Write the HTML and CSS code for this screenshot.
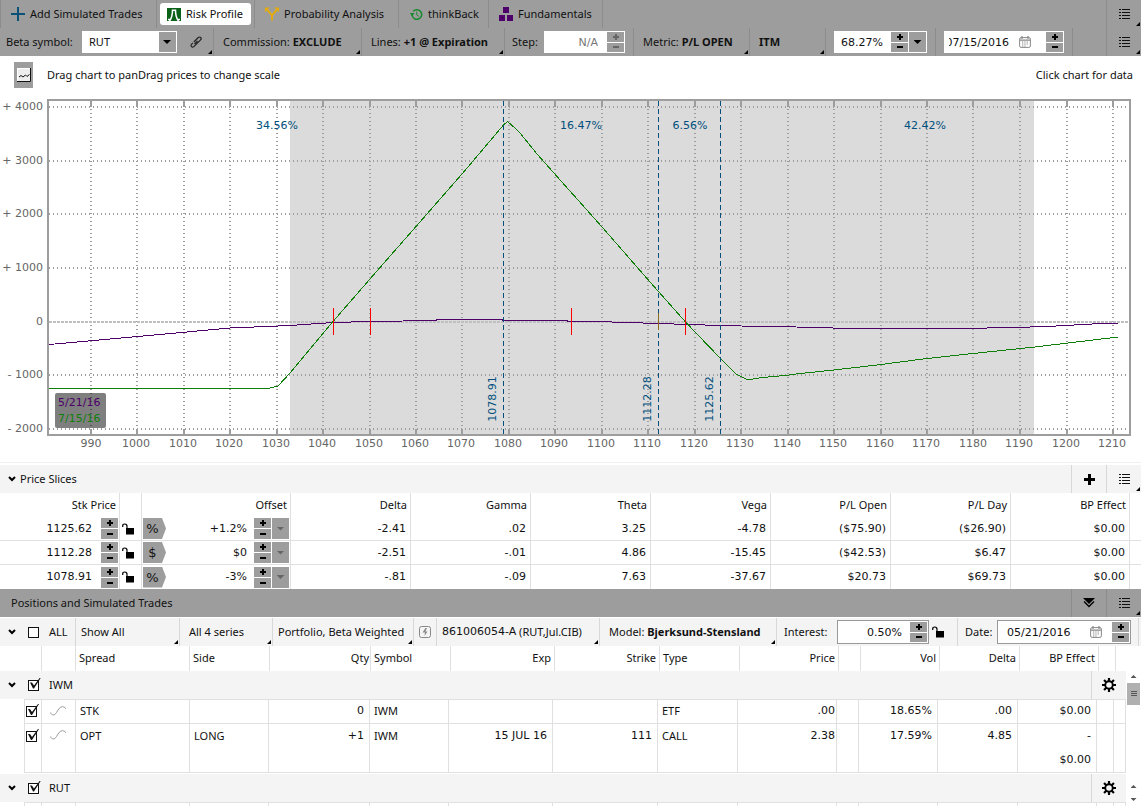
FILE: index.html
```html
<!DOCTYPE html>
<html lang="en">
<head>
<meta charset="utf-8">
<title>Risk Profile</title>
<link rel="stylesheet" href="styles.css">
</head>
<body>
<svg class="defs" aria-hidden="true">
  <symbol id="i-list" viewBox="0 0 11 10"><path d="M3 .5h8M3 3.500h8M3 6.500h8M3 9.500h8M0 .5h2M0 3.500h2M0 6.500h2M0 9.500h2" stroke="#111" stroke-width="1" shape-rendering="crispEdges"/></symbol>
  <symbol id="i-lock" viewBox="0 0 12 12"><path d="M4 5h8v6.500h-8z" fill="#000"/><path d="M.7 4V3Q.7 1 2.700 1Q5 1 5 3.200V5.500" fill="none" stroke="#000" stroke-width="1.200"/></symbol>
  <symbol id="i-cal" viewBox="0 0 12 12"><rect x=".6" y="1.600" width="10.800" height="9.800" rx="1.500" fill="none" stroke="#888"/><path d="M3 0v3M9 0v3M1 4.200h10" stroke="#888" stroke-width="1.200"/><path d="M3 6h6.500M3 8h6.500M3 10h4.500" stroke="#888" stroke-dasharray="1.300 1"/></symbol>
  <symbol id="i-gear" viewBox="0 0 14 14"><g stroke="#000" stroke-width="2.200"><path d="M7 0V14M0 7H14M2.050 2.050L11.950 11.950M11.950 2.050L2.050 11.950"/></g><circle cx="7" cy="7" r="4.700" fill="#000"/><circle cx="7" cy="7" r="2.800" fill="#f4f4f4"/></symbol>
  <symbol id="i-wave" viewBox="0 0 16 10"><path d="M.5 6.500C1.500 9.500 4.500 10 6.500 6.500C8.500 3 10 .7 12.500 .7C14.500 .7 15.300 1.600 15.600 2.800" fill="none" stroke="#999"/></symbol>
  <symbol id="i-chev" viewBox="0 0 8 6"><path d="M1 1L4 4L7 1" fill="none" stroke="#000" stroke-width="2"/></symbol>
</svg>
<div class="app">
  <nav class="bar tabs">
    <button class="cell tab w-add"><svg width="14" height="14" viewBox="0 0 14 14"><path d="M7 0V14M0 7H14" stroke="#0a5278" stroke-width="2"/></svg>Add Simulated Trades</button>
    <div class="cell w-risk"><button class="pill"><svg width="14" height="13" viewBox="0 0 14 13"><path d="M0 0H14V13H0Z" fill="#0c6118"/><path d="M2.500 13Q5.500 9 5.500 2.200H8.500Q8.500 9 11.500 13M1 11.500H4M10 11.500H13" fill="none" stroke="#fff" stroke-width="1.500"/><path d="M7 5V13" stroke="#0c6118"/></svg>Risk Profile</button></div>
    <button class="cell tab w-prob"><svg width="14" height="14" viewBox="0 0 15 14"><path d="M7.500 14V8.500L2.500 2.500M7.500 8.500L12.500 2.500" fill="none" stroke="#e5ac0b" stroke-width="2"/><path d="M0 0H5L0 5ZM15 0H10L15 5Z" fill="#e5ac0b"/></svg>Probability Analysis</button>
    <button class="cell tab w-think"><svg width="13" height="13" viewBox="0 0 14 13"><path d="M2.200 7A5.200 5.200 0 1 0 3.500 3" fill="none" stroke="#158a2c" stroke-width="1.600"/><path d="M0 5H5L2.300 8.500Z" fill="#158a2c"/><path d="M7.300 3.500V7L9.500 8.500" fill="none" stroke="#158a2c"/></svg>thinkBack</button>
    <button class="cell tab w-fund"><svg width="14" height="14" viewBox="0 0 14 14"><path d="M4 0H10V6H4ZM0 8H6V14H0ZM8 8H14V14H8Z" fill="#4d0069"/></svg>Fundamentals</button>
    <span class="grow"></span>
    <button class="cell menu corner" aria-label="Menu"><svg width="11" height="10"><use href="#i-list"/></svg></button>
  </nav>

  <div class="bar tools">
    <div class="cell corner w-beta"><label for="beta">Beta symbol:</label>
      <span class="combo"><select id="beta"><option>RUT</option></select></span>
      <button class="plain" aria-label="Link"><svg width="12" height="12" viewBox="0 0 12 12"><path d="M7.500 5L4.500 8M2.800 7L1.500 8.300A1.600 1.600 0 0 0 3.800 10.600L10.600 3.800A1.600 1.600 0 0 0 8.300 1.500L3.800 6" fill="none" stroke="#222" stroke-width="1.200"/></svg></button></div>
    <button class="cell corner pad w-comm">Commission: <b>EXCLUDE</b></button>
    <button class="cell corner pad w-lines">Lines: <b>+1 @ Expiration</b></button>
    <div class="cell w-step"><label for="step">Step:</label>
      <span class="field f-step"><input id="step" class="num" value="N/A" disabled><span class="spin off"><button aria-label="Step up"></button><button aria-label="Step down"></button></span></span></div>
    <button class="cell corner pad w-metric">Metric: <b>P/L OPEN</b></button>
    <button class="cell corner pad w-itm"><b>ITM</b></button>
    <div class="cell w-pct"><span class="field f-pct"><input class="num" aria-label="Probability" value="68.27%"><span class="spin"><button aria-label="Increase"></button><button aria-label="Decrease"></button></span><button class="drop" aria-label="Choose"></button></span></div>
    <div class="cell w-date"><span class="field f-date"><span class="clip"><input class="num" aria-label="Date" value="07/15/2016"></span><svg class="cal" width="12" height="12"><use href="#i-cal"/></svg><span class="spin"><button aria-label="Next day"></button><button aria-label="Previous day"></button></span></span></div>
    <span class="cell grow"></span>
    <button class="cell menu corner" aria-label="Menu"><svg width="11" height="10"><use href="#i-list"/></svg></button>
  </div>

  <div class="hints">
    <button class="chartbtn" aria-label="Chart"><svg width="14" height="14" viewBox="0 0 14 14"><rect x=".5" y=".5" width="13" height="13" fill="#eee" stroke="#fff"/><path d="M13.500 0V13.500H0" fill="none" stroke="#111"/><path d="M2 9L4 7.500L6 9L8.500 7L10 8.500L12.500 6.500" fill="none" stroke="#111"/></svg></button>
    <span class="grow">Drag chart to panDrag prices to change scale</span>
    <span>Click chart for data</span>
  </div>

  <svg class="chart" viewBox="0 94 1141 368" role="img" aria-label="Profit and loss by price">
    <rect x="290" y="101" width="744" height="333" fill="#dbdbdb"/>
    <g fill="none" stroke="#9d9d9d" stroke-width="2" shape-rendering="crispEdges">
      <path stroke-dasharray="1 3" d="M91 101V434M137 101V434M184 101V434M230 101V434M277 101V434M323 101V434M370 101V434M416 101V434M462 101V434M509 101V434M555 101V434M602 101V434M648 101V434M695 101V434M741 101V434M788 101V434M834 101V434M881 101V434M927 101V434M973 101V434M1020 101V434M1067 101V434M1113 101V434M49 107H1129M49 161H1129M49 214H1129M49 268H1129M49 375H1129M49 429H1129"/>
      <path stroke="#c0c0c0" stroke-dasharray="3 1" d="M49 322H1129"/>
      <path d="M91 101v6M137 101v6M184 101v6M230 101v6M277 101v6M323 101v6M370 101v6M416 101v6M462 101v6M509 101v6M555 101v6M602 101v6M648 101v6M695 101v6M741 101v6M788 101v6M834 101v6M881 101v6M927 101v6M973 101v6M1020 101v6M1067 101v6M1113 101v6M91 434v-5M137 434v-5M184 434v-5M230 434v-5M277 434v-5M323 434v-5M370 434v-5M416 434v-5M462 434v-5M509 434v-5M555 434v-5M602 434v-5M648 434v-5M695 434v-5M741 434v-5M788 434v-5M834 434v-5M881 434v-5M927 434v-5M973 434v-5M1020 434v-5M1067 434v-5M1113 434v-5"/>
      <rect x="48" y="100" width="1082" height="335"/>
      <g stroke-width="1">
        <path stroke="#4d0069" d="M49 344.500L138 336.500L230 328L290 325.500L333 322.500L370 321.500L436 320.500L436 319.500H502V320.500H567V321.500L612 322L658 323.500L720 325.500L762 326.500L796 327L851 328.500H960L1014 327.500L1047 326.500L1101 323.500H1118"/>
        <path stroke="#0f7f0a" d="M49 388.500H268L278 386L290 373L333 321.500L380 267.500L416 226.500L462 174L503.500 125L507.500 121.500L516 129L520 133L537 154L602 227L658 291L686 322.500L720 358L736 374L740 376L747 379.500H750L762 377.500L785 375.500L796 374L834 370L881 364.500L927 358.500L973 353.500L1035 347L1068 343L1118 337"/>
        <path stroke="#004f7c" stroke-dasharray="5 3" d="M503.500 101V434M658.500 101V434M720.500 101V434"/>
        <path stroke="#f00" d="M333.500 308V335M370.500 308V335M571.500 308V335M685.500 308V335"/>
        <path stroke="#8a6a1e" d="M658.500 313V330"/>
      </g>
    </g>
    <rect x="55" y="393" width="51" height="35" rx="2" fill="#000" fill-opacity=".5"/>
    <text x="58" y="406" fill="#4d0069">5/21/16</text><text x="58" y="422" fill="#0f7f0a">7/15/16</text>
    <g fill="#666" text-anchor="end">
      <text x="43" y="110">+ 4000</text><text x="43" y="164">+ 3000</text><text x="43" y="217">+ 2000</text><text x="43" y="271">+ 1000</text><text x="43" y="325">0</text><text x="43" y="378">- 1000</text><text x="43" y="432">- 2000</text>
    </g>
    <g fill="#666" text-anchor="middle">
      <text x="91" y="447">990</text><text x="136" y="447">1000</text><text x="183" y="447">1010</text><text x="229" y="447">1020</text><text x="276" y="447">1030</text><text x="322" y="447">1040</text><text x="369" y="447">1050</text><text x="415" y="447">1060</text><text x="461" y="447">1070</text><text x="508" y="447">1080</text><text x="554" y="447">1090</text><text x="601" y="447">1100</text><text x="647" y="447">1110</text><text x="694" y="447">1120</text><text x="740" y="447">1130</text><text x="787" y="447">1140</text><text x="833" y="447">1150</text><text x="880" y="447">1160</text><text x="926" y="447">1170</text><text x="973" y="447">1180</text><text x="1019" y="447">1190</text><text x="1066" y="447">1200</text><text x="1112" y="447">1210</text>
    </g>
    <g fill="#004f7c" text-anchor="middle">
      <text x="277" y="129">34.56%</text><text x="581" y="129">16.47%</text><text x="690" y="129">6.56%</text><text x="925" y="129">42.42%</text>
      <text transform="translate(496 399) rotate(-90)">1078.91</text><text transform="translate(651 399) rotate(-90)">1112.28</text><text transform="translate(713 399) rotate(-90)">1125.62</text>
    </g>
  </svg>

  <section class="slices">
    <div class="bar light head">
      <button class="fold" aria-label="Collapse"><svg width="8" height="6"><use href="#i-chev"/></svg></button><span class="grow">Price Slices</span>
      <button class="cell side" aria-label="Add slice"><svg width="12" height="12" viewBox="0 0 12 12"><path d="M6.500 1V12M1 6.500H12" stroke="#000" stroke-width="3"/></svg></button>
      <button class="cell side menu corner" aria-label="Menu"><svg width="11" height="10"><use href="#i-list"/></svg></button>
    </div>
    <table class="grid price">
      <colgroup><col class="c120"><col class="c22"><col class="c149"><col class="c120"><col class="c120"><col class="c120"><col class="c120"><col class="c120"><col class="c120"><col class="c119"><col class="c12"></colgroup>
      <thead><tr><th>Stk Price</th><th></th><th>Offset</th><th>Delta</th><th>Gamma</th><th>Theta</th><th>Vega</th><th>P/L Open</th><th>P/L Day</th><th>BP Effect</th><th></th></tr></thead>
      <tbody>
        <tr><td><div class="edit"><input class="num" aria-label="Stock price" value="1125.62"><span class="spin"><button aria-label="Up"></button><button aria-label="Down"></button></span></div></td><td class="lk"><svg width="12" height="12"><use href="#i-lock"/></svg></td><td><div class="edit off-edit"><button class="tag">%</button><input class="num" aria-label="Offset" value="+1.2%"><span class="spin"><button aria-label="Up"></button><button aria-label="Down"></button></span><button class="drop dim" aria-label="Choose"></button></div></td><td>-2.41</td><td>.02</td><td>3.25</td><td>-4.78</td><td>($75.90)</td><td>($26.90)</td><td>$0.00</td><td></td></tr>
        <tr><td><div class="edit"><input class="num" aria-label="Stock price" value="1112.28"><span class="spin"><button aria-label="Up"></button><button aria-label="Down"></button></span></div></td><td class="lk"><svg width="12" height="12"><use href="#i-lock"/></svg></td><td><div class="edit off-edit"><button class="tag">$</button><input class="num" aria-label="Offset" value="$0"><span class="spin"><button aria-label="Up"></button><button aria-label="Down"></button></span><button class="drop dim" aria-label="Choose"></button></div></td><td>-2.51</td><td>-.01</td><td>4.86</td><td>-15.45</td><td>($42.53)</td><td>$6.47</td><td>$0.00</td><td></td></tr>
        <tr><td><div class="edit"><input class="num" aria-label="Stock price" value="1078.91"><span class="spin"><button aria-label="Up"></button><button aria-label="Down"></button></span></div></td><td class="lk"><svg width="12" height="12"><use href="#i-lock"/></svg></td><td><div class="edit off-edit"><button class="tag">%</button><input class="num" aria-label="Offset" value="-3%"><span class="spin"><button aria-label="Up"></button><button aria-label="Down"></button></span><button class="drop dim" aria-label="Choose"></button></div></td><td>-.81</td><td>-.09</td><td>7.63</td><td>-37.67</td><td>$20.73</td><td>$69.73</td><td>$0.00</td><td></td></tr>
      </tbody>
    </table>
  </section>

  <section class="positions">
    <div class="bar head">
      <span class="grow title">Positions and Simulated Trades</span>
      <button class="cell side" aria-label="Collapse panel"><svg width="12" height="10" viewBox="0 0 12 10"><path d="M0 0H12L6 6Z" fill="#000"/><path d="M1 3.500L6 8.500L11 3.500" fill="none" stroke="#000" stroke-width="1.300"/></svg></button>
      <button class="cell side menu corner" aria-label="Menu"><svg width="11" height="10"><use href="#i-list"/></svg></button>
    </div>
    <div class="bar light filters">
      <div class="cell w-all"><button class="fold" aria-label="Collapse all"><svg width="8" height="6"><use href="#i-chev"/></svg></button><label class="pick"><input type="checkbox">ALL</label></div>
      <button class="cell corner w-show">Show All</button>
      <button class="cell corner w-series">All 4 series</button>
      <button class="cell corner w-port">Portfolio, Beta Weighted</button>
      <button class="cell w-bolt" aria-label="Quick action"><svg width="12" height="12" viewBox="0 0 12 12"><rect x=".5" y=".5" width="11" height="11" rx="2" fill="none" stroke="#888"/><path d="M6.500 2L3.500 6.500H6L5.500 10L8.500 5.500H6.300L8 2Z" fill="#888"/></svg></button>
      <button class="cell corner w-acct"><span class="num">861006054-A</span> (RUT,Jul.CIB)</button>
      <button class="cell corner w-model">Model: <b>Bjerksund-Stensland</b></button>
      <div class="cell w-int"><label for="rate">Interest:</label><span class="field lined f-int"><input id="rate" class="num" value="0.50%"><span class="spin"><button aria-label="Up"></button><button aria-label="Down"></button></span></span><svg class="rate-lock" width="12" height="12"><use href="#i-lock"/></svg></div>
      <div class="cell w-day"><label for="day">Date:</label><span class="field lined f-day"><input id="day" class="num" value="05/21/2016"><svg class="cal" width="12" height="12"><use href="#i-cal"/></svg><span class="spin"><button aria-label="Next day"></button><button aria-label="Previous day"></button></span></span></div>
    </div>
    <table class="grid poshead">
      <colgroup><col class="c42"><col class="c34"><col class="c114"><col class="c80"><col class="c101"><col class="c80"><col class="c104"><col class="c105"><col class="c80"><col class="c99"><col class="c22"><col class="c79"><col class="c80"><col class="c79"><col class="c17"><col class="c25"></colgroup>
      <thead><tr><th></th><th></th><th class="l">Spread</th><th class="l">Side</th><th class="tight">Qty</th><th class="l">Symbol</th><th>Exp</th><th>Strike</th><th class="l">Type</th><th>Price</th><th></th><th>Vol</th><th>Delta</th><th>BP Effect</th><th></th><th></th></tr></thead>
    </table>
    <div class="scroller">
      <div class="list">
        <div class="bar light group"><button class="fold" aria-label="Collapse"><svg width="8" height="6"><use href="#i-chev"/></svg></button><label class="pick grow"><input type="checkbox" checked>IWM</label><button class="cell side" aria-label="Settings"><svg width="14" height="14"><use href="#i-gear"/></svg></button></div>
        <table class="grid pos">
          <colgroup><col class="c18"><col class="c34"><col class="c114"><col class="c79"><col class="c101"><col class="c79"><col class="c104"><col class="c105"><col class="c80"><col class="c99"><col class="c22"><col class="c79"><col class="c80"><col class="c79"><col class="c17"><col class="c12"></colgroup>
          <tbody>
            <tr><td class="ck"><input type="checkbox" aria-label="Include STK" checked></td><td class="wv"><svg width="16" height="10"><use href="#i-wave"/></svg></td><td class="l">STK</td><td></td><td>0</td><td class="l">IWM</td><td></td><td></td><td class="l">ETF</td><td class="tight">.00</td><td></td><td>18.65%</td><td>.00</td><td>$0.00</td><td></td><td></td></tr>
            <tr class="tall"><td class="ck"><input type="checkbox" aria-label="Include OPT" checked></td><td class="wv"><svg width="16" height="10"><use href="#i-wave"/></svg></td><td class="l">OPT</td><td class="l">LONG</td><td>+1</td><td class="l">IWM</td><td>15 JUL 16</td><td>111</td><td class="l">CALL</td><td class="tight">2.38</td><td></td><td>17.59%</td><td>4.85</td><td>-<br>$0.00</td><td></td><td></td></tr>
          </tbody>
        </table>
        <div class="bar light group"><button class="fold" aria-label="Collapse"><svg width="8" height="6"><use href="#i-chev"/></svg></button><label class="pick grow"><input type="checkbox" checked>RUT</label><button class="cell side" aria-label="Settings"><svg width="14" height="14"><use href="#i-gear"/></svg></button></div>
        <table class="grid pos">
          <colgroup><col class="c18"><col class="c34"><col class="c114"><col class="c79"><col class="c101"><col class="c79"><col class="c104"><col class="c105"><col class="c80"><col class="c99"><col class="c22"><col class="c79"><col class="c80"><col class="c79"><col class="c17"><col class="c12"></colgroup>
          <tbody><tr><td></td><td></td><td></td><td></td><td></td><td></td><td></td><td></td><td></td><td></td><td></td><td></td><td></td><td></td><td></td><td></td></tr></tbody>
        </table>
      </div>
      <div class="scrollbar" aria-hidden="true"><i class="up"></i><span class="thumb"></span><span class="grow"></span><i class="up"></i><i class="down"></i></div>
    </div>
  </section>
</div>
</body>
</html>
```
FILE: styles.css
```css
* { box-sizing: border-box; }
body { margin: 0; background: #fff; color: #111; font: 11px/16px "Noto Sans", "Open Sans", sans-serif; }
button, input, select { font: inherit; color: inherit; border: 0; padding: 0; margin: 0; background: none; border-radius: 0; }
button { white-space: nowrap; }
svg { display: block; flex: none; }
.defs { position: absolute; width: 0; height: 0; }
.num { font-family: "DejaVu Sans", sans-serif; }
.grow { flex: 1; }
.app { height: 100vh; display: flex; flex-direction: column; overflow: hidden; }

.bar { display: flex; align-items: stretch; height: 28px; background: #9d9d9d; flex: none; }
.light { background: #f4f4f4; }
.cell { display: flex; align-items: center; flex: none; position: relative; text-align: left; white-space: pre; border-right: 1px solid #8c8c8c; }
.cell.grow { flex: 1; }
.light .cell { border-color: #d8d8d8; }
.corner::after { content: ""; position: absolute; right: 1px; bottom: 2px; width: 4px; height: 4px; background: #000; clip-path: polygon(100% 0, 100% 100%, 0 100%); }
.menu { width: 34px; justify-content: center; border-right: 0; }
.side { width: 35px; justify-content: center; border-right: 0; border-left: 1px solid #8c8c8c; }
.light .side { border-color: #d8d8d8; }

.tabs { padding-left: 1px; box-shadow: inset 1px 0 #8c8c8c; }
.tabs .grow { border-right: 1px solid #8c8c8c; }
.tab { gap: 5px; padding-left: 10px; }
.w-add { width: 156px; }
.w-risk { width: 98px; justify-content: center; }
.w-prob { width: 144px; }
.w-think { width: 90px; padding-left: 11px; }
.w-fund { width: 114px; }
.pill { display: flex; align-items: center; gap: 5px; height: 22px; width: 91px; padding-left: 7px; background: #fff; border-radius: 3px; }

.tools .pad { padding-left: 9px; }
.w-beta { width: 214px; padding-left: 6px; }
.w-comm { width: 148px; }
.w-lines { width: 143px; }
.w-step { width: 129px; padding: 0 8px 0 7px; justify-content: space-between; }
.w-metric { width: 116px; }
.w-itm { width: 76px; }
.w-pct { width: 110px; padding-left: 8px; }
.w-date { width: 137px; padding-left: 8px; }
.combo { position: relative; width: 95px; height: 22px; margin-left: auto; margin-right: 13px; background: #fff; }
.combo select { appearance: none; width: 100%; height: 22px; padding-left: 7px; }
.combo::after { content: ""; position: absolute; right: 1px; top: 1px; width: 17px; height: 20px; background: #000; clip-path: polygon(4px 8px, 12px 8px, 8px 12px); pointer-events: none; }
.combo::before { content: ""; position: absolute; right: 1px; top: 1px; width: 17px; height: 20px; background: #9d9d9d; pointer-events: none; }
.plain { margin-right: 11px; }

.field { display: flex; align-items: center; height: 22px; padding: 1px; background: #fff; gap: 1px; }
.field input { flex: 1; min-width: 0; width: 0; height: 20px; text-align: right; padding-right: 8px; }
.lined { border: 1px solid #999; height: 24px; }
.f-step { width: 81px; }
.f-step input { color: #777; }
.f-pct { width: 93px; }
.f-pct input { padding-right: 7px; }
.f-date { width: 120px; }
.field .clip { display: flex; justify-content: flex-end; overflow: hidden; width: 60px; margin-left: auto; }
.field .clip input { flex: none; width: 66px; padding: 0; }
.cal { margin: 0 14px 0 9px; }
.spin { display: grid; width: 17px; height: 20px; gap: 1px; grid-template-rows: minmax(0, 1fr) minmax(0, 1fr); flex: none; }
.spin button { background: #9d9d9d; position: relative; }
.spin button::before { content: ""; position: absolute; inset: 0; margin: auto; width: 6px; height: 2px; background: #000; }
.spin button:first-child::after { content: ""; position: absolute; inset: 0; margin: auto; width: 2px; height: 6px; background: #000; }
.off button::before, .off button:first-child::after { background: #666; }
.drop { position: relative; width: 17px; height: 20px; background: #9d9d9d; flex: none; }
.drop::after { content: ""; position: absolute; inset: 0; margin: auto; width: 8px; height: 4px; background: #000; clip-path: polygon(0 0, 100% 0, 50% 100%); }
.dim::after { background: #666; }

.hints { display: flex; align-items: center; height: 38px; padding: 0 8px 0 14px; gap: 14px; flex: none; }
.chartbtn { display: grid; place-items: center; width: 19px; height: 26px; background: #9d9d9d; }
.chart { width: 100%; height: auto; font: 11px "DejaVu Sans", sans-serif; }

.slices { border-top: 1px solid #f0f0f0; padding-top: 2px; flex: none; }
.fold { display: grid; place-items: center; width: 8px; margin-left: 8px; margin-right: 4px; flex: none; }
.head { align-items: stretch; }
.head > .grow { line-height: 28px; }
.title { padding-left: 11px; }

.grid { width: 100%; table-layout: fixed; border-collapse: separate; border-spacing: 0; }
.grid th, .grid td { font-weight: 400; text-align: right; padding: 0 3px 0 4px; border-right: 1px solid #e0e0e0; height: 24px; white-space: nowrap; }
.grid td { padding-right: 4px; font-family: "DejaVu Sans", sans-serif; }
.grid .l { text-align: left; font-family: inherit; }
.grid tr > :last-child { border-right: 0; }
.price tbody tr:not(:last-child) td { border-bottom: 1px solid #e0e0e0; }
.price td:nth-child(-n+3) { padding: 0; }
.edit { display: flex; align-items: center; padding-right: 1px; gap: 1px; }
.edit input { flex: 1; width: 0; min-width: 0; text-align: right; padding-right: 8px; }
.edit .spin, .edit .drop { height: 21px; }
.off-edit { padding-left: 1px; }
.off-edit input { padding-right: 6px; }
.tag { width: 23px; height: 21px; padding-right: 4px; background: #9d9d9d; clip-path: polygon(0 0, 19px 0, 100% 50%, 19px 100%, 0 100%); font: 13px "DejaVu Sans", sans-serif; }
.lk svg { margin: 0 auto 0 2px; }

.positions { flex: 1; min-height: 0; display: flex; flex-direction: column; }
.filters { border-top: 0; margin-top: 1px; }
.filters .cell { padding-left: 5px; }
.filters .w-all { width: 76px; padding-left: 0; }
.filters .w-show { width: 104px; }
.filters .w-series { width: 93px; padding-left: 9px; }
.w-port { width: 141px; }
.w-bolt { width: 23px; }
.w-acct { width: 163px; }
.filters .w-model { width: 177px; padding-left: 9px; }
.filters .w-int { width: 181px; padding-left: 7px; }
.filters .w-day { width: 181px; padding: 0 7px; justify-content: space-between; }
.f-int { width: 92px; margin-left: auto; }
.f-int input { padding-right: 7px; }
.rate-lock { margin: 0 13px 0 3px; }
.f-day { width: 134px; }
.f-day input { text-align: left; padding: 0 0 0 8px; }
.f-day .cal { margin-right: 9px; }

.pick { display: flex; align-items: center; gap: 10px; margin-left: 8px; }
input[type="checkbox"] { appearance: none; position: relative; width: 11px; height: 11px; border: 1px solid #111; background: #fff; flex: none; }
input[type="checkbox"]:checked::after { content: ""; position: absolute; left: 1px; top: -3px; width: 11px; height: 11px; background: #111; clip-path: polygon(0 5px, 2px 5px, 4px 8px, 10px 0, 11px 0, 4px 11px, 3px 11px); }

.poshead { flex: none; }
.poshead th { height: 25px; padding-bottom: 2px; }
.poshead .l { padding-left: 3px; }
.grid .tight { padding-right: 1px; }
.scroller { flex: 1; min-height: 0; display: flex; overflow: hidden; }
.list { flex: 1; min-width: 0; }
.pos { width: calc(100% - 24px); margin: 0 0 1px 24px; }
.pos td { border-top: 1px solid #e0e0e0; height: 25px; padding-right: 5px; padding-bottom: 2px; }
.pos tr > :last-child { border-right: 1px solid #e0e0e0; }
.pos td:first-child { border-left: 1px solid #e0e0e0; }
.pos tr:first-child td { height: 24px; }
.pos .tall td { height: 50px; vertical-align: top; line-height: 24px; border-bottom: 1px solid #e0e0e0; padding-bottom: 0; }
.pos .ck { padding: 0 0 0 1px; text-align: left; }
.ck input { display: block; }
.tall .ck input { margin-top: 7px; }
.pos .wv { padding: 0 0 2px 8px; }
.tall .wv svg { margin-top: 6px; }
.scrollbar { width: 15px; display: flex; flex-direction: column; align-items: center; padding: 4px 1px 5px; gap: 5px; }
.scrollbar i { width: 6px; height: 3px; background: #555; clip-path: polygon(50% 0, 100% 100%, 0 100%); }
.scrollbar .down { clip-path: polygon(0 0, 100% 0, 50% 100%); margin-top: 5px; }
.thumb { width: 13px; height: 22px; background: linear-gradient(#555, #555) 50% 8px / 6px 1px no-repeat, linear-gradient(#555, #555) 50% 10px / 6px 1px no-repeat, linear-gradient(#555, #555) 50% 12px / 6px 1px no-repeat, #b0b0b0; }

.c12 { width: 12px; } .c17 { width: 17px; } .c18 { width: 18px; } .c22 { width: 22px; } .c25 { width: 25px; }
.c34 { width: 34px; } .c42 { width: 42px; } .c79 { width: 79px; } .c80 { width: 80px; } .c99 { width: 99px; }
.c101 { width: 101px; } .c104 { width: 104px; } .c105 { width: 105px; } .c114 { width: 114px; }
.c119 { width: 119px; } .c120 { width: 120px; } .c149 { width: 149px; }
```
